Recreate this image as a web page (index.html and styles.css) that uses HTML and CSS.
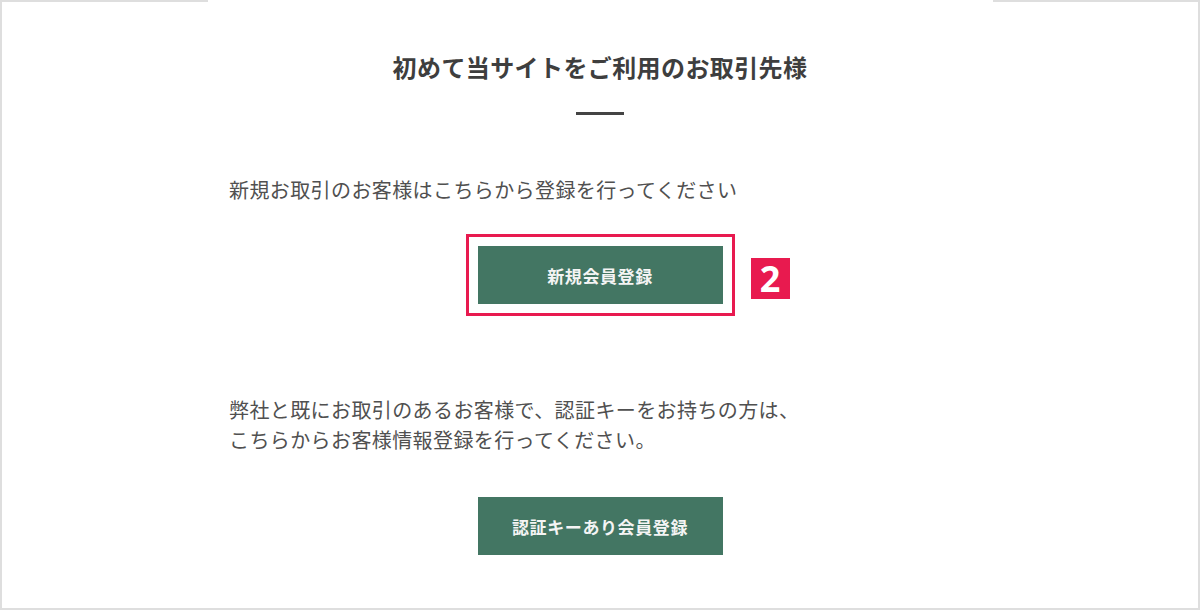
FILE: index.html
```html
<!DOCTYPE html>
<html lang="ja">
  <head>
    <meta charset="utf-8">
    <title>初めて当サイトをご利用のお取引先様</title>
    <meta name="viewport" content="width=device-width, initial-scale=1.0">
    <link rel="stylesheet" href="styles.css">
  </head>
  <body>
    <div class="top-edge">
      <span class="edge"></span>
      <span class="edge edge-right"></span>
    </div>

    <div class="frame">
      <div class="content">
        <h1 class="title">初めて当サイトをご利用のお取引先様</h1>
        <div class="title-bar"></div>

        <p class="lead">新規お取引のお客様はこちらから登録を行ってください</p>

        <div class="btn-row">
          <div class="highlight">
            <a class="btn" href="#">新規会員登録</a>
            <span class="badge">2</span>
          </div>
        </div>

        <p class="lead lead-second">弊社と既にお取引のあるお客様で、認証キーをお持ちの方は、<br>こちらからお客様情報登録を行ってください。</p>

        <div class="btn-row btn-row-second">
          <a class="btn" href="#">認証キーあり会員登録</a>
        </div>
      </div>
    </div>
  </body>
</html>
```

FILE: styles.css
```css
/* page */
body {
  margin: 0;
  background-color: #fff;
  font-family: "Noto Sans CJK JP", "Noto Sans", sans-serif;
  color: #505050;
}

.top-edge {
  display: flex;
  justify-content: space-between;
  width: 1200px;
  height: 2px;
}

.edge {
  display: block;
  width: 208px;
  height: 2px;
  background-color: #dedede;
}

.edge-right {
  width: 207px;
}

.frame {
  width: 1200px;
  height: 608px;
  box-sizing: border-box;
  border: 2px solid #dedede;
  border-top: none;
}

.content {
  width: 742px;
  margin: 0 auto;
}

/* heading */
.title {
  margin: 0;
  padding-top: 48px;
  font-size: 24px;
  line-height: 33px;
  letter-spacing: 0.4px;
  font-weight: bold;
  text-align: center;
  color: #3e3e3e;
}

.title-bar {
  width: 48px;
  height: 3px;
  margin: 29px auto 0;
  background-color: #444;
}

/* text */
.lead {
  margin: 60px 0 0;
  font-size: 20px;
  line-height: 30px;
  letter-spacing: 0.4px;
  white-space: nowrap;
}

.lead-second {
  margin-top: 79px;
}

/* buttons */
.btn-row {
  display: flex;
  justify-content: center;
  margin-top: 29px;
}

.btn-row-second {
  margin-top: 42px;
}

.highlight {
  position: relative;
  padding: 9px;
  border: 3px solid #e81a4f;
}

.btn {
  display: flex;
  align-items: center;
  justify-content: center;
  width: 245px;
  height: 58px;
  background-color: #437663;
  color: #f4f4f4;
  font-size: 17px;
  font-weight: bold;
  letter-spacing: 0.6px;
  text-decoration: none;
}

.badge {
  position: absolute;
  left: calc(100% + 19px);
  top: 21px;
  display: flex;
  align-items: center;
  justify-content: center;
  width: 39px;
  height: 41px;
  background-color: #e81a4f;
  color: #fff;
  font-family: "Open Sans", "Noto Sans", sans-serif;
  font-size: 36px;
  line-height: 1;
  font-weight: bold;
}
```
